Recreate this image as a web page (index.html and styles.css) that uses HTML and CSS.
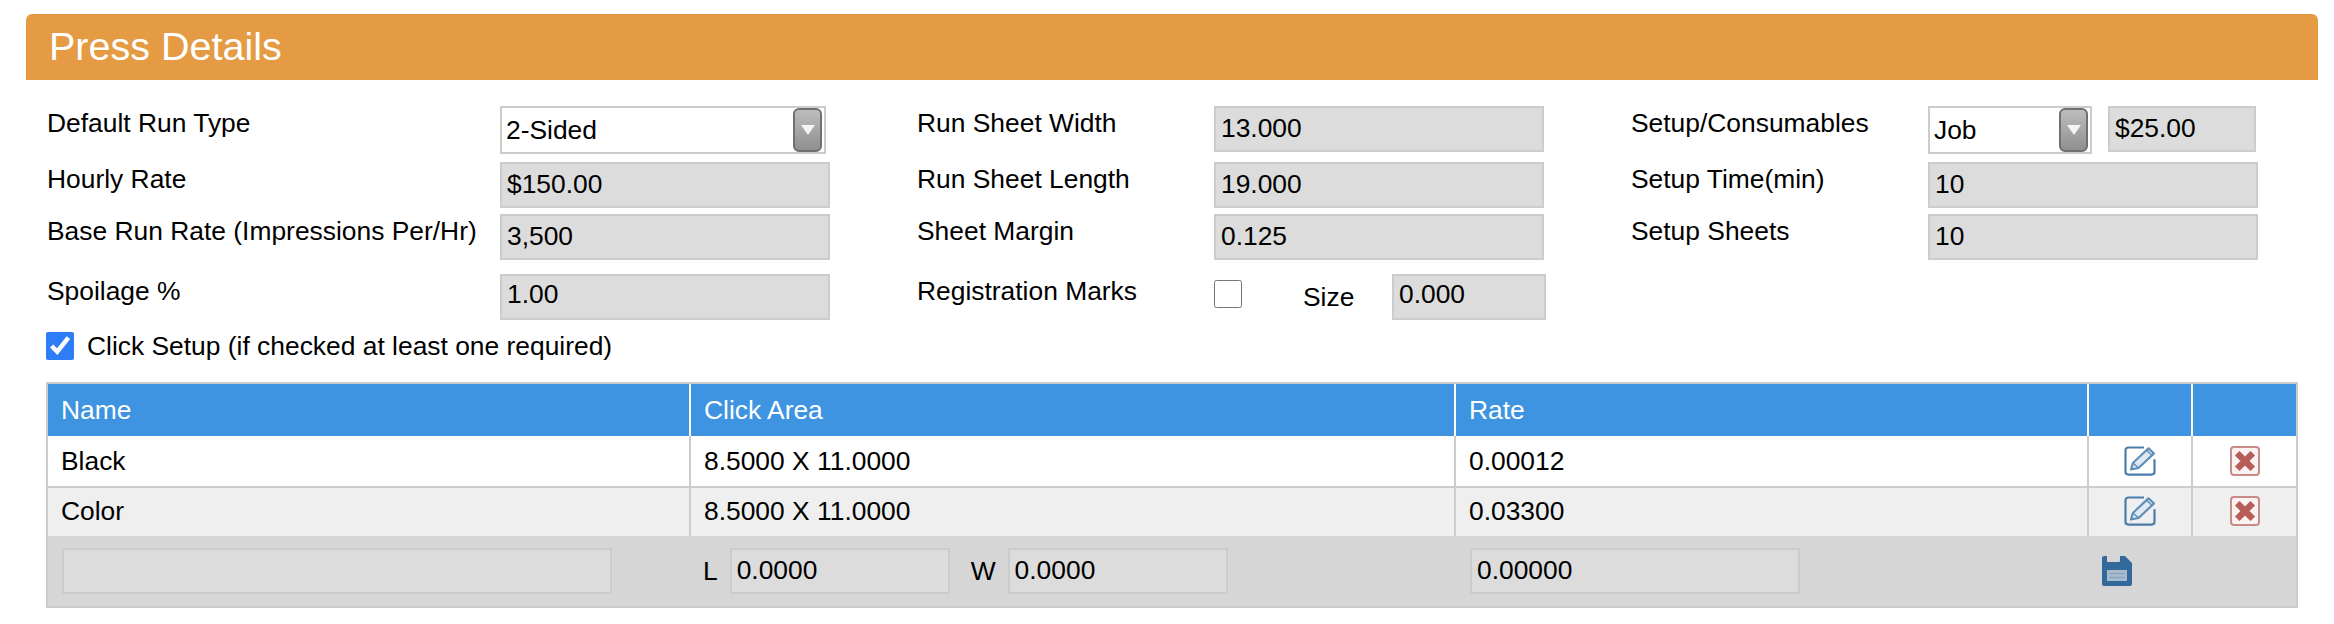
FILE: index.html
```html
<!DOCTYPE html>
<html lang="en">
<head>
<meta charset="utf-8">
<title>Press Details</title>
<link rel="stylesheet" href="styles.css">
</head>
<body>
<section class="panel">
  <h2 class="panel-title">Press Details</h2>
  <div class="form-grid">
    <label class="label">Default Run Type</label>
    <div class="select wide"><span>2-Sided</span><span class="select-btn"><svg viewBox="0 0 14 10" width="14" height="10"><path d="M0 0h14L7 10z" fill="#f4f4f4"/></svg></span></div>
    <label class="label">Run Sheet Width</label>
    <span class="field">13.000</span>
    <label class="label">Setup/Consumables</label>
    <div class="inline-group">
      <div class="select narrow"><span>Job</span><span class="select-btn"><svg viewBox="0 0 14 10" width="14" height="10"><path d="M0 0h14L7 10z" fill="#f4f4f4"/></svg></span></div>
      <span class="field short">$25.00</span>
    </div>

    <label class="label">Hourly Rate</label>
    <span class="field">$150.00</span>
    <label class="label">Run Sheet Length</label>
    <span class="field">19.000</span>
    <label class="label">Setup Time(min)</label>
    <span class="field">10</span>

    <label class="label">Base Run Rate (Impressions Per/Hr)</label>
    <span class="field">3,500</span>
    <label class="label">Sheet Margin</label>
    <span class="field">0.125</span>
    <label class="label">Setup Sheets</label>
    <span class="field">10</span>

    <label class="label">Spoilage %</label>
    <span class="field raised">1.00</span>
    <label class="label">Registration Marks</label>
    <div class="reg-group">
      <input class="check" type="checkbox">
      <span class="size-label">Size</span>
      <span class="field raised size-field">0.000</span>
    </div>
  </div>
  <div class="click-setup">
    <input class="check" type="checkbox" checked>
    <span>Click Setup (if checked at least one required)</span>
  </div>
  <div class="table-wrap">
    <table class="clicks">
      <colgroup><col class="c1"><col class="c2"><col class="c3"><col class="c4"><col class="c5"></colgroup>
      <thead>
        <tr><th>Name</th><th>Click Area</th><th>Rate</th><th></th><th></th></tr>
      </thead>
      <tbody>
        <tr>
          <td>Black</td><td>8.5000 X 11.0000</td><td>0.00012</td>
          <td class="icon-cell"><svg class="icon" viewBox="0 0 32 32" preserveAspectRatio="none"><use href="#edit"/></svg></td>
          <td class="icon-cell"><svg class="icon del" viewBox="0 0 30 30"><use href="#del"/></svg></td>
        </tr>
        <tr class="alt">
          <td>Color</td><td>8.5000 X 11.0000</td><td>0.03300</td>
          <td class="icon-cell"><svg class="icon" viewBox="0 0 32 32" preserveAspectRatio="none"><use href="#edit"/></svg></td>
          <td class="icon-cell"><svg class="icon del" viewBox="0 0 30 30"><use href="#del"/></svg></td>
        </tr>
      </tbody>
      <tfoot>
        <tr>
          <td class="name-cell"><span class="field foot name-field"></span></td>
          <td class="dims-cell">
            <div class="dims">
              <span>L</span><span class="field foot dim">0.0000</span>
              <span class="w-label">W</span><span class="field foot dim">0.0000</span>
            </div>
          </td>
          <td class="rate-cell"><span class="field foot rate-field">0.00000</span></td>
          <td class="save-cell" colspan="2">
            <svg class="save" viewBox="0 0 30 30">
              <path d="M2 0h3v5a1 1 0 0 0 1 1h11a1 1 0 0 0 1-1V0h5l7 7v21a2 2 0 0 1-2 2H2a2 2 0 0 1-2-2V2a2 2 0 0 1 2-2z" fill="#33699a"/>
              <rect x="5" y="14" width="20" height="11" fill="#a9bccd"/>
              <path d="M7 17.5h16M7 21.5h16" stroke="#8aa5bd" stroke-width="1.5"/>
            </svg>
          </td>
        </tr>
      </tfoot>
    </table>
  </div>
</section>
<svg class="defs" width="0" height="0" aria-hidden="true">
  <defs>
    <g id="edit">
      <path d="M20 1.500H4.500a3 3 0 0 0-3 3v23a3 3 0 0 0 3 3h23a3 3 0 0 0 3-3V14" fill="none" stroke="#4a7dab" stroke-width="2.200"/>
      <path d="M7 25l2-7L24.500 2.500l5.500 5.500L14.500 23.500z" fill="#dfe9f2" stroke="#5e8db8" stroke-width="2.200" stroke-linejoin="round"/>
      <path d="M9 18l5.500 5.500M22.500 4.500l5.500 5.500" stroke="#5e8db8" stroke-width="1.500"/>
    </g>
    <g id="del">
      <rect x="1" y="1" width="28" height="28" rx="3" fill="#fbf3f2" stroke="#c98b87" stroke-width="2"/>
      <path d="M9.500 9.500l11 11M20.500 9.500l-11 11" stroke="#b65e57" stroke-width="6.500" stroke-linecap="square"/>
    </g>
  </defs>
</svg>
</body>
</html>
```
FILE: styles.css
```css
* { box-sizing: border-box; }

body {
  margin: 0;
  background: #fff;
  color: #000;
  font-family: "Liberation Sans", Arial, sans-serif;
  font-size: 26.4px;
  line-height: 30px;
}

.panel { padding: 14px 16px 16px 26px; }

.panel-title {
  margin: 0;
  height: 66px;
  padding-left: 23px;
  background: #e59b43;
  border-radius: 6px 6px 0 0;
  color: #fff;
  font-size: 39.5px;
  font-weight: 400;
  line-height: 64px;
}

.form-grid {
  display: grid;
  grid-template-columns: 454px 416px 298px 416px 298px 330px;
  grid-template-rows: 56px 52px 60px 46px;
  margin: 26px 0 0 20px;
}

.label { padding: 2px 0 0 1px; white-space: nowrap; }

.field {
  display: block;
  height: 46px;
  width: 330px;
  padding-left: 5px;
  background: #dcdcdc;
  border: 2px solid #ccc;
  line-height: 40px;
  white-space: nowrap;
}

.field.raised { line-height: 37px; }

.select {
  display: flex;
  align-items: center;
  justify-content: space-between;
  height: 48px;
  padding: 0 2px 0 4px;
  background: #fff;
  border: 2px solid #ccc;
}

.select.wide { width: 326px; }
.select.narrow { width: 164px; flex: none; }

.select-btn {
  display: flex;
  align-items: center;
  justify-content: center;
  width: 29px;
  height: 44px;
  background: linear-gradient(#bdbdbd, #8f8f8f);
  border: 2px solid #707070;
  border-radius: 6px;
}

.inline-group { display: flex; gap: 16px; align-items: flex-start; }
.field.short { width: 148px; }

.reg-group { display: flex; align-items: flex-start; }
.reg-group .check { margin-top: 6px; }
.size-label { margin: 8px 38px 0 61px; width: 51px; }
.field.size-field { width: 154px; }

.check {
  width: 28px;
  height: 28px;
  margin: 0;
  flex: none;
  accent-color: #2f7df6;
}

.click-setup {
  display: flex;
  align-items: center;
  gap: 13px;
  height: 28px;
  margin: 12px 0 22px 20px;
}

.table-wrap {
  width: 2252px;
  margin-left: 20px;
  border: 2px solid #ccc;
}

.clicks {
  width: 2248px;
  table-layout: fixed;
  border-collapse: separate;
  border-spacing: 0;
}

.c1 { width: 641px; }
.c2 { width: 765px; }
.c3 { width: 633px; }
.c4 { width: 104px; }
.c5 { width: 105px; }

.clicks th,
.clicks td {
  padding: 0 0 0 13px;
  text-align: left;
  vertical-align: middle;
  font-weight: 400;
  white-space: nowrap;
}

.clicks th + th,
.clicks td + td { border-left: 2px solid #ccc; }

.clicks th {
  height: 52px;
  background: #3e94e0;
  color: #fff;
}

.clicks th + th { border-left-color: #fff; }

.clicks tbody td { height: 52px; border-bottom: 2px solid #ccc; }
.clicks tbody .alt td { height: 48px; padding-bottom: 2px; background: #efefef; border-bottom: 0; }

.clicks .icon-cell { padding: 0; text-align: center; line-height: 0; }
.icon { width: 32px; height: 30px; }
.icon.del { width: 30px; height: 30px; }

.clicks tfoot td { height: 70px; background: #d6d6d6; border-left: 0; }
.clicks tfoot .name-cell,
.clicks tfoot .dims-cell { padding-left: 14px; }
.clicks tfoot .rate-cell { padding-left: 16px; }

.field.foot { height: 46px; }
.field.name-field { width: 550px; }
.field.rate-field { width: 330px; }
.field.dim { width: 220px; }

.dims { display: flex; align-items: center; gap: 12px; }
.w-label { margin-left: 9px; }

.clicks .save-cell { padding-left: 15px; line-height: 0; }
.save { width: 30px; height: 30px; }

.defs { position: absolute; }
```
